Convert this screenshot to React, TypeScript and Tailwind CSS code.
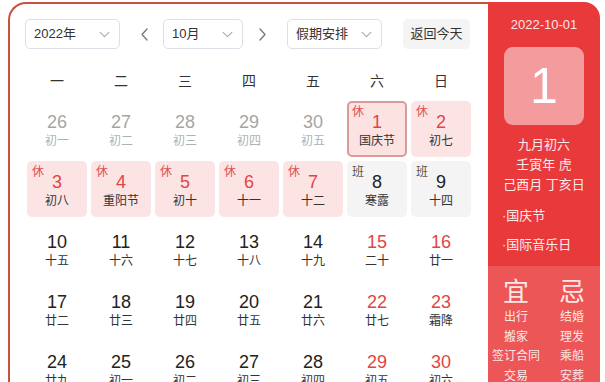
import React from 'react';

type Day = {
  n: number;
  lunar: string;
  kind?: 'prev' | 'rest' | 'work';
  weekend?: boolean;
  today?: boolean;
};

const rows: Day[][] = [
  [
    { n: 26, lunar: '初一', kind: 'prev' },
    { n: 27, lunar: '初二', kind: 'prev' },
    { n: 28, lunar: '初三', kind: 'prev' },
    { n: 29, lunar: '初四', kind: 'prev' },
    { n: 30, lunar: '初五', kind: 'prev' },
    { n: 1, lunar: '国庆节', kind: 'rest', today: true },
    { n: 2, lunar: '初七', kind: 'rest' },
  ],
  [
    { n: 3, lunar: '初八', kind: 'rest' },
    { n: 4, lunar: '重阳节', kind: 'rest' },
    { n: 5, lunar: '初十', kind: 'rest' },
    { n: 6, lunar: '十一', kind: 'rest' },
    { n: 7, lunar: '十二', kind: 'rest' },
    { n: 8, lunar: '寒露', kind: 'work' },
    { n: 9, lunar: '十四', kind: 'work' },
  ],
  [
    { n: 10, lunar: '十五' },
    { n: 11, lunar: '十六' },
    { n: 12, lunar: '十七' },
    { n: 13, lunar: '十八' },
    { n: 14, lunar: '十九' },
    { n: 15, lunar: '二十', weekend: true },
    { n: 16, lunar: '廿一', weekend: true },
  ],
  [
    { n: 17, lunar: '廿二' },
    { n: 18, lunar: '廿三' },
    { n: 19, lunar: '廿四' },
    { n: 20, lunar: '廿五' },
    { n: 21, lunar: '廿六' },
    { n: 22, lunar: '廿七', weekend: true },
    { n: 23, lunar: '霜降', weekend: true },
  ],
  [
    { n: 24, lunar: '廿九' },
    { n: 25, lunar: '初一' },
    { n: 26, lunar: '初二' },
    { n: 27, lunar: '初三' },
    { n: 28, lunar: '初四' },
    { n: 29, lunar: '初五', weekend: true },
    { n: 30, lunar: '初六', weekend: true },
  ],
];

const weekdays = ['一', '二', '三', '四', '五', '六', '日'];

const Chevron = ({ dir, className }: { dir: 'down' | 'left' | 'right'; className?: string }) => {
  const d = dir === 'down' ? 'M1 1.5l5 5 5-5' : dir === 'left' ? 'M7 1L2 6.5 7 12' : 'M2 1l5 5.5L2 12';
  const vb = dir === 'down' ? '0 0 12 8' : '0 0 9 13';
  return (
    <svg viewBox={vb} className={className} fill="none" stroke="currentColor" strokeWidth="1.3" strokeLinecap="round" strokeLinejoin="round">
      <path d={d} />
    </svg>
  );
};

const Select = ({ label, w }: { label: string; w: string }) => (
  <div className={`${w} h-[30px] border border-[#dcdfe6] rounded-[5px] flex items-center justify-between pl-2 pr-[9px] text-[13px] text-[#333]`}>
    <span>{label}</span>
    <Chevron dir="down" className="w-[11px] h-[7px] text-[#a8abb2]" />
  </div>
);

const Cell = ({ d }: { d: Day }) => {
  let box = '';
  if (d.kind === 'rest') box = d.today ? 'bg-[#fde2e2] border-2 border-[#d99a9a]' : 'bg-[#fde4e4]';
  if (d.kind === 'work') box = 'bg-[#f4f4f5]';
  const numColor =
    d.kind === 'prev' ? 'text-[#a5a5a5]' : d.kind === 'rest' || d.weekend ? 'text-[#e04545]' : 'text-[#222]';
  const lunarColor = d.kind === 'prev' ? 'text-[#b0b0b0]' : 'text-[#333]';
  return (
    <div className={`relative h-[56px] rounded-[5px] flex flex-col items-center ${d.today ? 'pt-[9px]' : 'pt-[11px]'} ${box}`}>
      {d.kind === 'rest' && (
        <span className={`absolute ${d.today ? 'left-[3px] top-[1px]' : 'left-[5px] top-[3px]'} text-[12px] leading-[16px] text-[#e05050]`}>休</span>
      )}
      {d.kind === 'work' && (
        <span className="absolute left-[5px] top-[3px] text-[12px] leading-[16px] text-[#555]">班</span>
      )}
      <span className={`text-[18px] leading-[20px] ${numColor}`}>{d.n}</span>
      <span className={`mt-px text-[12px] leading-[16px] ${lunarColor}`}>{d.lunar}</span>
    </div>
  );
};

export default function App() {
  return (
    <div
      className="w-[605px] h-[382px] overflow-hidden bg-white pl-2 pt-0.5 flex"
      style={{ fontFamily: '"Liberation Sans", "Noto Sans CJK SC", sans-serif' }}
    >
      <div className="w-[480px] shrink-0 border-l-2 border-t-2 border-[#c9513f] rounded-tl-[18px] pl-[15px] pt-[15px]">
        <div className="flex items-center">
          <Select label="2022年" w="w-[95px]" />
          <Chevron dir="left" className="ml-5 w-[9px] h-[13px] text-[#777]" />
          <div className="ml-[14px]">
            <Select label="10月" w="w-[80px]" />
          </div>
          <Chevron dir="right" className="ml-[15px] w-[9px] h-[13px] text-[#777]" />
          <div className="ml-5">
            <Select label="假期安排" w="w-[95px]" />
          </div>
          <div className="ml-[21px] w-[67px] h-[30px] bg-[#f4f4f5] rounded-[5px] flex items-center justify-center text-[13px] text-[#333]">
            返回今天
          </div>
        </div>

        <div className="ml-[2px] mt-[17px] grid grid-cols-[repeat(7,60px)] gap-x-1">
          {weekdays.map((w) => (
            <div key={w} className="h-[30px] flex items-center justify-center text-[14px] text-[#333]">
              {w}
            </div>
          ))}
        </div>

        <div className="ml-[2px] mt-[5px] grid grid-cols-[repeat(7,60px)] gap-x-1 gap-y-1">
          {rows.flat().map((d, i) => (
            <Cell key={i} d={d} />
          ))}
        </div>
      </div>

      <div className="w-[112px] shrink-0 bg-[#e8393b] rounded-tr-[16px] flex flex-col text-white">
        <div className="flex flex-col items-center pt-[14px]">
          <div className="text-[13px] leading-[18px] text-[#fde6e6]">2022-10-01</div>
          <div className="mt-[13px] w-[80px] h-[78px] rounded-[9px] bg-white/50 flex items-center justify-center text-[50px] leading-none font-light">
            1
          </div>
          <div className="mt-[10px] flex flex-col items-center text-[13px] leading-[20px] text-[#fdeaea]">
            <span>九月初六</span>
            <span>壬寅年 虎</span>
            <span>己酉月 丁亥日</span>
          </div>
        </div>
        <div className="mt-[12px] pl-[14px] flex flex-col gap-[11px] text-[13px] leading-[18px] text-[#fdeaea]">
          <span>·国庆节</span>
          <span>·国际音乐日</span>
        </div>
        <div className="mt-[12px] flex-1 bg-[#ec5656] grid grid-cols-2 pt-[11px] text-[#fde8e8]">
          <div className="flex flex-col items-center">
            <span className="text-[26px] leading-[30px]">宜</span>
            <span className="text-[12px] leading-[19.5px] mt-[1px]">出行</span>
            <span className="text-[12px] leading-[19.5px]">搬家</span>
            <span className="text-[12px] leading-[19.5px] whitespace-nowrap">签订合同</span>
            <span className="text-[12px] leading-[19.5px]">交易</span>
          </div>
          <div className="flex flex-col items-center">
            <span className="text-[26px] leading-[30px]">忌</span>
            <span className="text-[12px] leading-[19.5px] mt-[1px]">结婚</span>
            <span className="text-[12px] leading-[19.5px]">理发</span>
            <span className="text-[12px] leading-[19.5px]">乘船</span>
            <span className="text-[12px] leading-[19.5px]">安葬</span>
          </div>
        </div>
      </div>
    </div>
  );
}
